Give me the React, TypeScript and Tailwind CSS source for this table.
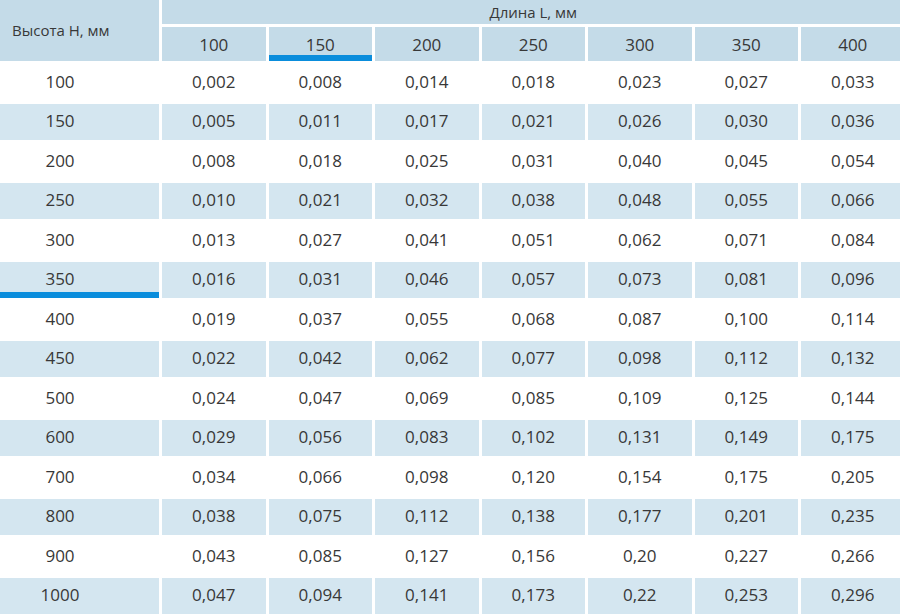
const lengths = ["100", "150", "200", "250", "300", "350", "400"];

const rows: [string, string[]][] = [
  ["100", ["0,002", "0,008", "0,014", "0,018", "0,023", "0,027", "0,033"]],
  ["150", ["0,005", "0,011", "0,017", "0,021", "0,026", "0,030", "0,036"]],
  ["200", ["0,008", "0,018", "0,025", "0,031", "0,040", "0,045", "0,054"]],
  ["250", ["0,010", "0,021", "0,032", "0,038", "0,048", "0,055", "0,066"]],
  ["300", ["0,013", "0,027", "0,041", "0,051", "0,062", "0,071", "0,084"]],
  ["350", ["0,016", "0,031", "0,046", "0,057", "0,073", "0,081", "0,096"]],
  ["400", ["0,019", "0,037", "0,055", "0,068", "0,087", "0,100", "0,114"]],
  ["450", ["0,022", "0,042", "0,062", "0,077", "0,098", "0,112", "0,132"]],
  ["500", ["0,024", "0,047", "0,069", "0,085", "0,109", "0,125", "0,144"]],
  ["600", ["0,029", "0,056", "0,083", "0,102", "0,131", "0,149", "0,175"]],
  ["700", ["0,034", "0,066", "0,098", "0,120", "0,154", "0,175", "0,205"]],
  ["800", ["0,038", "0,075", "0,112", "0,138", "0,177", "0,201", "0,235"]],
  ["900", ["0,043", "0,085", "0,127", "0,156", "0,20", "0,227", "0,266"]],
  ["1000", ["0,047", "0,094", "0,141", "0,173", "0,22", "0,253", "0,296"]],
];

// selected length / height get a blue underline
const Bar = () => <span className="absolute left-0 right-0 bottom-0 h-[6px] bg-[#0a8ddc]" />;

export default function App() {
  return (
    <div className="w-[900px] h-[615px] overflow-hidden bg-white text-[#383838] font-['Open_Sans',sans-serif]">
      <div className="w-[905px] grid grid-cols-[159px_repeat(7,103.5px)] grid-rows-[24px_34px] auto-rows-[36.5px] gap-[3px]">
        {/* header */}
        <div className="row-span-2 bg-[#c4dbe8] flex items-center pl-3 pb-[1px] text-[15px]">
          Высота H, мм
        </div>
        <div className="col-span-7 bg-[#c4dbe8] flex items-center justify-center text-[15px]">
          Длина L, мм
        </div>
        {lengths.map((l) => (
          <div key={l} className="relative bg-[#c4dbe8] flex items-center justify-center pt-[1px] text-[17px]">
            {l}
            {l === "150" && <Bar />}
          </div>
        ))}

        {/* body */}
        {rows.map(([h, vals], i) => {
          const bg = i % 2 === 1 ? "bg-[#d4e6f0]" : "bg-white";
          return [
            <div key={h} className={bg + " relative flex items-center justify-center pr-[39px] pb-[2px] text-[17px]"}>
              {h}
              {h === "350" && <Bar />}
            </div>,
            ...vals.map((v, j) => (
              <div key={h + "-" + j} className={bg + " flex items-center justify-center pb-[2px] text-[17px]"}>
                {v}
              </div>
            )),
          ];
        })}
      </div>
    </div>
  );
}
